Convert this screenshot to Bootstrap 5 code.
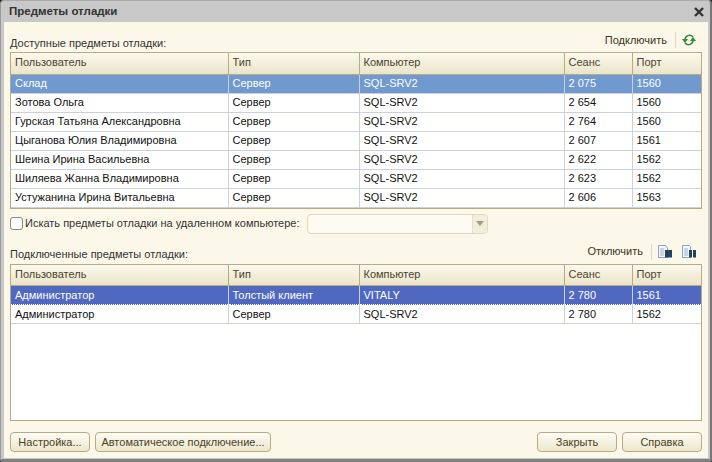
<!DOCTYPE html>
<html lang="ru">
<head>
<meta charset="utf-8">
<title>Предметы отладки</title>
<link href="https://cdn.jsdelivr.net/npm/bootstrap@5.3.0/dist/css/bootstrap.min.css" rel="stylesheet">
<style>
html,body{height:100%;margin:0;background:#222;}
body{font-family:"Liberation Sans",Arial,sans-serif;font-size:11px;color:#1c1c1c;overflow:hidden;}
.win{width:712px;height:462px;display:flex;flex-direction:column;background:#c8c8c8;border-top:1px solid #aaa;border-right:2px solid #777;border-bottom:3px solid #808080;border-left:1px solid #999;border-top-left-radius:4px;border-top-right-radius:4px;border-bottom-left-radius:2px;border-bottom-right-radius:2px;}
.ttl{height:21px;flex:none;padding:1px 6px 0 8px;display:flex;align-items:center;justify-content:space-between;font-weight:700;font-size:11.5px;color:#333;}
.cnt{flex:1;margin:0 2px 1px 3px;background:#fbf8e9;padding:0 6px;display:flex;flex-direction:column;min-height:0;}
.hrow{display:flex;align-items:flex-end;justify-content:space-between;height:30px;flex:none;}
.hrow2{height:26px;}
.cap{color:#333;line-height:16px;margin-bottom:1px;}
.hrow2 .cap{margin-bottom:2px;}
.cmds{display:flex;align-items:center;gap:6px;padding-right:6px;margin-bottom:4px;color:#3a3420;height:16px;}
.sep{width:1px;height:16px;background:#ddd8c0;margin:0 0 0 2px;}
.tw{border:1px solid #b5ab86;background:#fff;flex:none;}
.tw2{flex:1;min-height:0;}
.gtb{table-layout:fixed;width:100%;margin:0;border-collapse:collapse;font-size:11px;}
.gtb th{font-weight:400;height:21px;padding:0 4px 2px;color:#4a4330;background:linear-gradient(#fbf9ee,#ebe4c8);border-right:1px solid #b5ab86;border-bottom:1px solid #b5ab86;white-space:nowrap;}
.gtb td{height:19px;padding:0 4px;color:#111;background:#fff;border-right:1px solid #ccd0d8;border-bottom:1px solid #ccd0d8;white-space:nowrap;}
.gtb th:last-child,.gtb td:last-child{border-right:0;}
.gtb tr.sela td{background:#6f99cf;color:#fff;}
.gtb tr.selb td{background:#5068bf;color:#fff;border-top:1px dotted #fff;border-bottom:1px dotted #fff;}
.c1{width:217px}.c2{width:131px}.c3{width:205px}.c4{width:68px}
.srow{display:flex;align-items:center;height:28px;flex:none;margin-top:1px;}
.chk{width:13px;height:13px;border:1px solid #8f8a70;border-radius:3px;background:#fff;flex:none;margin-right:2px;}
.cbo{width:181px;height:20px;margin-left:8px;border:1px solid #dcd8c4;border-radius:4px;background:#fdfbf1;display:flex;justify-content:flex-end;overflow:hidden;}
.arr{width:15px;background:#f1eeda;border-left:1px solid #e4e0cb;display:flex;align-items:center;justify-content:center;}
.arr i{display:block;width:0;height:0;border-left:4px solid transparent;border-right:4px solid transparent;border-top:5px solid #9b9b8f;}
.foot{height:37px;flex:none;display:flex;align-items:flex-start;padding-top:11px;gap:5px;}
.bt{height:20px;padding:0;border:1px solid #b5ab86;border-radius:4px;background:linear-gradient(#fdfcf4,#ece6cc);font-size:11px;color:#4a4125;line-height:18px;text-align:center;}
.b1{width:80px}.b2{width:176px}.b3{width:80px}
.gsp{flex:1}
</style>
</head>
<body>
<div class="win">
  <div class="ttl"><span>Предметы отладки</span>
    <svg width="10" height="10" viewBox="0 0 10 10"><path d="M1 1l8 8M9 1l-8 8" stroke="#333" stroke-width="2.4"/></svg>
  </div>
  <div class="cnt">
    <div class="hrow"><span class="cap">Доступные предметы отладки:</span>
      <div class="cmds"><span>Подключить</span><span class="sep"></span>
        <svg width="14" height="14" viewBox="0 0 14 14" fill="none"><path d="M3 7A4.500 4.500 0 0 1 11 4" stroke="#2e8b37" stroke-width="1.5"/><path d="M0 6h6l-3 4z" fill="#2e8b37"/><path d="M11 7A4.500 4.500 0 0 1 3 10" stroke="#2e8b37" stroke-width="1.5"/><path d="M8 8h6l-3-4z" fill="#2e8b37"/></svg>
      </div>
    </div>
    <div class="tw">
      <table class="gtb">
        <colgroup><col class="c1"><col class="c2"><col class="c3"><col class="c4"><col></colgroup>
        <thead><tr><th>Пользователь</th><th>Тип</th><th>Компьютер</th><th>Сеанс</th><th>Порт</th></tr></thead>
        <tbody>
          <tr class="sela"><td>Склад</td><td>Сервер</td><td>SQL-SRV2</td><td>2 075</td><td>1560</td></tr>
          <tr><td>Зотова Ольга</td><td>Сервер</td><td>SQL-SRV2</td><td>2 654</td><td>1560</td></tr>
          <tr><td>Гурская Татьяна Александровна</td><td>Сервер</td><td>SQL-SRV2</td><td>2 764</td><td>1560</td></tr>
          <tr><td>Цыганова Юлия Владимировна</td><td>Сервер</td><td>SQL-SRV2</td><td>2 607</td><td>1561</td></tr>
          <tr><td>Шеина Ирина Васильевна</td><td>Сервер</td><td>SQL-SRV2</td><td>2 622</td><td>1562</td></tr>
          <tr><td>Шиляева Жанна Владимировна</td><td>Сервер</td><td>SQL-SRV2</td><td>2 623</td><td>1562</td></tr>
          <tr><td>Устужанина Ирина Витальевна</td><td>Сервер</td><td>SQL-SRV2</td><td>2 606</td><td>1563</td></tr>
        </tbody>
      </table>
    </div>
    <div class="srow"><span class="chk"></span><span class="cap">Искать предметы отладки на удаленном компьютере:</span>
      <div class="cbo"><span class="arr"><i></i></span></div>
    </div>
    <div class="hrow hrow2"><span class="cap">Подключенные предметы отладки:</span>
      <div class="cmds"><span>Отключить</span><span class="sep"></span>
        <svg width="14" height="15" viewBox="0 0 14 15"><path d="M.5 1.500h7l2 2.500v9.500H.5z" fill="#f4f7fb" stroke="#8ea6bd"/><path d="M2 5h4M2 7h4M2 9h4M2 11h4" stroke="#9db4ca"/><rect x="7" y="6" width="7" height="7.500" fill="#24425f"/></svg>
        <svg class="ms-1" width="14" height="15" viewBox="0 0 14 15"><path d="M.5 1.500h7l1 1v11H.5z" fill="#f4f7fb" stroke="#8ea6bd"/><path d="M2 5h4M2 7h4M2 9h4M2 11h4" stroke="#9db4ca"/><rect x="7" y="6" width="3" height="7.500" fill="#24425f"/><rect x="11" y="6" width="3" height="7.500" fill="#24425f"/></svg>
      </div>
    </div>
    <div class="tw tw2">
      <table class="gtb">
        <colgroup><col class="c1"><col class="c2"><col class="c3"><col class="c4"><col></colgroup>
        <thead><tr><th>Пользователь</th><th>Тип</th><th>Компьютер</th><th>Сеанс</th><th>Порт</th></tr></thead>
        <tbody>
          <tr class="selb"><td>Администратор</td><td>Толстый клиент</td><td>VITALY</td><td>2 780</td><td>1561</td></tr>
          <tr><td>Администратор</td><td>Сервер</td><td>SQL-SRV2</td><td>2 780</td><td>1562</td></tr>
        </tbody>
      </table>
    </div>
    <div class="foot">
      <button class="bt b1" type="button">Настройка...</button>
      <button class="bt b2" type="button">Автоматическое подключение...</button>
      <span class="gsp"></span>
      <button class="bt b3" type="button">Закрыть</button>
      <button class="bt b3" type="button">Справка</button>
    </div>
  </div>
</div>
</body>
</html>
